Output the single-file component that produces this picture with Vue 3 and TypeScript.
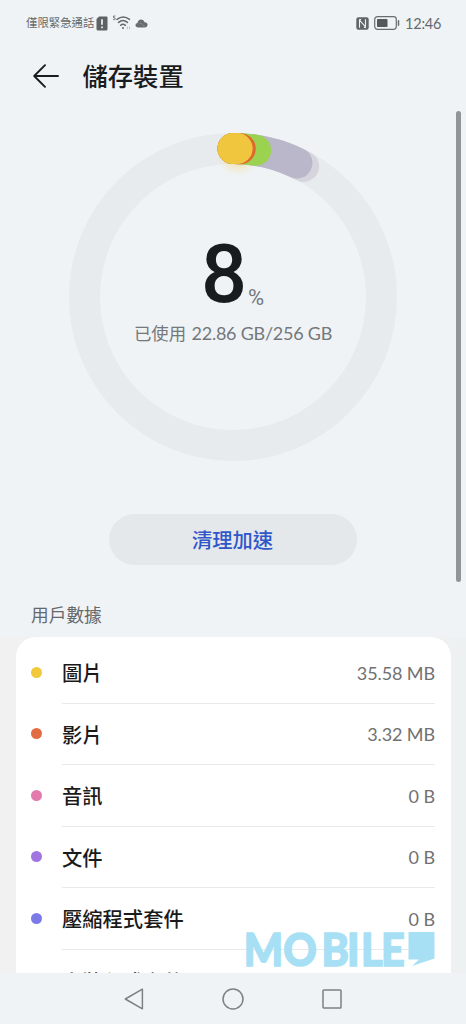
<script setup lang="ts">
interface Category {
  name: string
  size?: string
  color: string
}

interface Segment {
  degrees: number
  color: string
}

const categories: Category[] = [
  { name: '圖片', size: '35.58 MB', color: '#f2c93b' },
  { name: '影片', size: '3.32 MB', color: '#e36d43' },
  { name: '音訊', size: '0 B', color: '#e27aae' },
  { name: '文件', size: '0 B', color: '#a276e0' },
  { name: '壓縮程式套件', size: '0 B', color: '#7b7ae8' },
  { name: '安裝程式套件', color: '#5b8ee8' },
]

const radius = 148.5
const center = 164

const segments: Segment[] = [
  { degrees: 28.4, color: '#d6d5de' },
  { degrees: 25.5, color: '#bab7ca' },
  { degrees: 8.8, color: '#9bd250' },
  { degrees: 2.8, color: '#e0672f' },
  { degrees: 1.6, color: '#f1c63f' },
]

function arc(degrees: number): string {
  const a = (degrees * Math.PI) / 180
  const x = center + radius * Math.sin(a)
  const y = center - radius * Math.cos(a)
  return `M${center} ${center - radius}A${radius} ${radius} 0 0 1 ${x.toFixed(2)} ${y.toFixed(2)}`
}
</script>

<template>
  <div class="screen">
    <header class="status">
      <span class="carrier">僅限緊急通話</span>
      <svg class="sim" width="12" height="15" viewBox="0 0 12 15">
        <path d="M3 0.5H10.5Q11.5 0.5 11.5 1.5V13Q11.5 14.5 10 14.5H2Q0.5 14.5 0.5 13V3Z" fill="#5d6164" />
        <path d="M6 3.2V8.8M6 10.5V12.3" stroke="#f0f3f6" stroke-width="1.7" />
      </svg>
      <svg class="wifi" width="19" height="16" viewBox="0 0 19 16" fill="none" stroke="#65696c" stroke-width="1.5" stroke-linecap="round">
        <path d="M5 4.4Q11.3 -0.6 17.5 4.4M6.6 7.4Q11 3.6 15.4 7.4M8.6 10.3Q11 8.4 13.4 10.3" />
        <circle cx="11" cy="13" r="1" fill="#65696c" stroke="none" />
        <path d="M3 1H1.6V2.8Q3.4 2.5 3.3 4Q3 5.3 1.5 4.7" stroke-width="0.9" />
        <path d="M15.3 12V13.7M17.5 12V13.7" stroke="#b4b8bb" stroke-width="0.9" />
      </svg>
      <svg class="cloud" width="13" height="9" viewBox="0 0 13 9">
        <path d="M3 8.5Q0.4 8.3 0.4 6.2Q0.5 4.2 2.5 4Q3 0.7 6.2 0.5Q8.8 0.5 9.6 3.2Q12.6 3.4 12.6 6Q12.4 8.3 10 8.5Z" fill="#686c70" />
        <path d="M4.5 4.5Q6.5 3.5 7.5 5.6L9.7 8" fill="none" stroke="#8d9194" stroke-width="0.8" />
      </svg>
      <span class="spacer"></span>
      <svg class="nfc" width="13" height="13" viewBox="0 0 13 13">
        <rect x="0.3" y="0.3" width="12.4" height="12.4" rx="2.2" fill="#606467" />
        <path d="M3.5 10.7V3.2L9.5 9.8V2.3M3.5 3.2L5 2.2M9.5 9.8L8 10.8" fill="none" stroke="#f0f3f6" stroke-width="1.1" />
      </svg>
      <svg class="battery" width="26" height="14" viewBox="0 0 26 14">
        <rect x="0.7" y="0.7" width="21.6" height="12.6" rx="2.8" fill="none" stroke="#696d70" stroke-width="1.2" />
        <rect x="3" y="3" width="10.5" height="8" rx="0.8" fill="#55595c" />
        <path d="M24.5 4.7V9.3" stroke="#696d70" stroke-width="1.5" stroke-linecap="round" />
      </svg>
      <time class="clock">12:46</time>
    </header>

    <div class="titlebar">
      <svg width="26" height="24" viewBox="0 0 26 24" fill="none" stroke="#191c1f" stroke-width="1.9" stroke-linecap="round" stroke-linejoin="round">
        <path d="M12 1.2L1.2 12L12 22.8M1.2 12H25" />
      </svg>
      <h1>儲存裝置</h1>
    </div>

    <main class="content">
      <section class="gauge">
        <svg class="ring" width="328" height="328" viewBox="0 0 328 328">
          <defs>
            <filter id="glow" x="-50%" y="-50%" width="200%" height="200%">
              <feGaussianBlur stdDeviation="4" />
            </filter>
          </defs>
          <circle :cx="center" :cy="center" :r="radius" fill="none" stroke="#e8ebed" stroke-width="31" />
          <ellipse cx="169" cy="23" rx="15" ry="14" fill="#f5d98c" opacity="0.55" filter="url(#glow)" />
          <path
            v-for="s in segments"
            :key="s.color"
            :d="arc(s.degrees)"
            fill="none"
            :stroke="s.color"
            stroke-width="31"
            stroke-linecap="round"
          />
        </svg>
        <div class="reading">
          <div class="percent"><span class="number">8</span><span class="unit">%</span></div>
          <p class="usage">已使用 <span class="amount">22.86 GB/256 GB</span></p>
        </div>
      </section>

      <button class="clean" type="button">清理加速</button>

      <h2>用戶數據</h2>
      <div class="list-area">
        <ul class="card">
          <li v-for="c in categories" :key="c.name">
            <i class="dot" :style="{ background: c.color }"></i>
            <div class="row">
              <span class="name">{{ c.name }}</span>
              <span v-if="c.size" class="size">{{ c.size }}</span>
            </div>
          </li>
        </ul>
      </div>
    </main>

    <nav>
      <svg width="20" height="22" viewBox="0 0 20 22" fill="none" stroke="#7d8184" stroke-width="1.5" stroke-linejoin="round">
        <path d="M18.4 1.2V20.8L1.3 11Z" />
      </svg>
      <svg width="22" height="22" viewBox="0 0 22 22" fill="none" stroke="#7d8184" stroke-width="1.5">
        <circle cx="11" cy="11" r="10" />
      </svg>
      <svg width="20" height="20" viewBox="0 0 20 20" fill="none" stroke="#7d8184" stroke-width="1.5">
        <rect x="1" y="1" width="18" height="18" rx="0.8" />
      </svg>
    </nav>

    <div class="scrollbar"></div>
    <svg class="watermark" width="190" height="38" viewBox="0 0 190 38">
      <text x="-1.5 42.4 85 113.3 128.8 151" y="35" transform="scale(0.9 1)">MOBILE</text>
      <path d="M163.5 1H189.5V27.5L167 35L174 28.5H163.5Z" />
    </svg>
  </div>
</template>

<style>
body {
  margin: 0;
  background: #eff3f6;
}
</style>

<style scoped>
.screen {
  position: relative;
  width: 466px;
  height: 1024px;
  overflow: hidden;
  display: flex;
  flex-direction: column;
  background: #eff3f6;
  color: #191c1f;
  font-family: Lato, "Noto Sans CJK TC", sans-serif;
}
.status {
  height: 46px;
  flex: none;
  display: flex;
  align-items: center;
  box-sizing: border-box;
  padding: 0 25px 0 26px;
  color: #65696c;
}
.carrier {
  width: 70px;
  font-size: 11.4px;
  line-height: 16px;
  white-space: nowrap;
}
.wifi {
  margin-left: 4px;
}
.cloud {
  margin-left: 4px;
}
.spacer {
  flex: 1;
}
.battery {
  margin: 0 5px 0 5px;
}
.clock {
  width: 36px;
  font-size: 14.5px;
  letter-spacing: -0.2px;
  white-space: nowrap;
}
.titlebar {
  height: 60px;
  flex: none;
  display: flex;
  align-items: center;
  gap: 23.5px;
  padding-left: 33px;
}
h1 {
  margin: 0;
  font-size: 25.3px;
  line-height: 34px;
  font-weight: 500;
}
.content {
  flex: 1;
  min-height: 0;
  overflow: hidden;
  display: flex;
  flex-direction: column;
}
.gauge {
  flex: none;
  display: grid;
  justify-content: center;
  margin-top: 27px;
}
.ring,
.reading {
  grid-area: 1 / 1;
}
.reading {
  padding-top: 100px;
  text-align: center;
}
.percent {
  height: 84px;
  margin-left: -1px;
  line-height: 84px;
}
.number {
  font-family: Roboto, sans-serif;
  font-size: 81px;
  font-weight: 500;
}
.unit {
  margin-left: 1px;
  font-family: Roboto, sans-serif;
  font-size: 22px;
  color: #74787b;
  position: relative;
  top: 3px;
}
.usage {
  margin: 3px 0 0;
  font-size: 17.4px;
  line-height: 26px;
  color: #74787b;
  white-space: nowrap;
}
.amount {
  margin-left: 1px;
  font-size: 18px;
  letter-spacing: -0.25px;
}
.clean {
  flex: none;
  align-self: center;
  width: 248px;
  height: 51px;
  margin-top: 53px;
  padding: 0 1px 0 0;
  border: 0;
  border-radius: 26px;
  background: #e5e8ea;
  color: #2f57c9;
  font: 500 20.3px/51px "Noto Sans CJK TC", sans-serif;
}
h2 {
  margin: 38px 0 0 31px;
  font-size: 17.7px;
  line-height: 26px;
  font-weight: 400;
  color: #65696c;
}
.list-area {
  flex: 1;
  min-height: 0;
  overflow: hidden;
  margin-top: 8px;
  padding: 0 15px 0 16px;
  background: linear-gradient(90deg, #f1f1f1 16px, #edf1f2 450px);
}
.card {
  margin: 0;
  padding: 5.4px 16px 0 15px;
  list-style: none;
  border-radius: 20px 20px 0 0;
  background: #fff;
}
li {
  display: flex;
  align-items: center;
  height: 61.5px;
}
.dot {
  flex: none;
  width: 11px;
  height: 11px;
  border-radius: 50%;
  margin: 0 20.5px 2px -0.5px;
}
.row {
  flex: 1;
  height: 100%;
  box-sizing: border-box;
  display: flex;
  align-items: center;
  justify-content: space-between;
  border-bottom: 1px solid #e9e9e9;
}
.name {
  margin-bottom: 1px;
  font-size: 20.3px;
  font-weight: 500;
  color: #1a1a1a;
}
li:last-child .name {
  margin-bottom: -1px;
}
.size {
  font-size: 18px;
  letter-spacing: -0.1px;
  color: #717171;
}
nav {
  flex: none;
  height: 51px;
  display: flex;
  align-items: center;
  justify-content: center;
  gap: 78px;
  background: #eff3f6;
}
.scrollbar {
  position: absolute;
  left: 456px;
  top: 111px;
  width: 5px;
  height: 471px;
  border-radius: 3px;
  background: #919598;
}
.watermark {
  position: absolute;
  left: 245px;
  top: 931px;
  fill: #a7dff4;
}
.watermark text {
  font-family: Lato, sans-serif;
  font-size: 46px;
  font-weight: 900;
  stroke: #a7dff4;
  stroke-width: 1.5;
}
</style>
